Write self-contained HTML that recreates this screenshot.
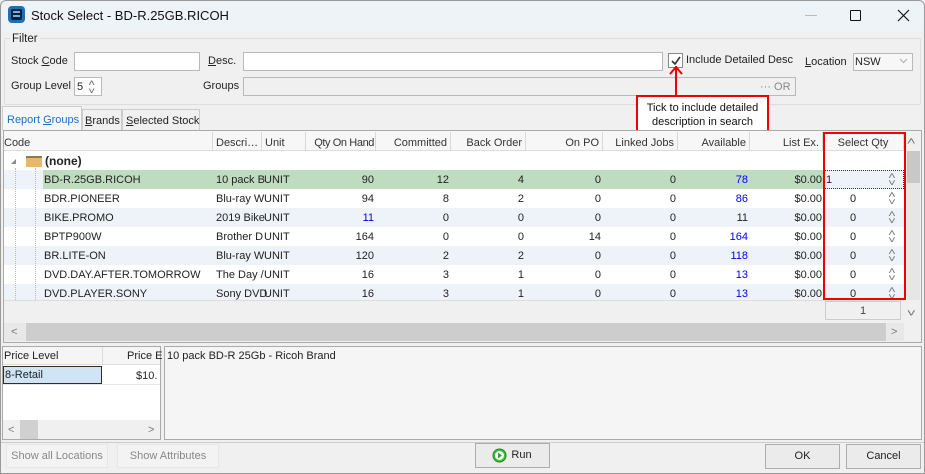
<!DOCTYPE html>
<html><head><meta charset="utf-8">
<style>
*{box-sizing:border-box;margin:0;padding:0}
body{width:925px;height:474px;overflow:hidden;background:#f0f0f0;font-family:"Liberation Sans",Arial,sans-serif;font-size:11px;color:#222;position:relative}
.a{position:absolute;white-space:nowrap}
.inp{position:absolute;background:#fff;border:1px solid #b9b9b9}
.h{position:absolute;top:132px;height:20px;border-right:1px solid #d8d8d8;line-height:22px;padding:0 3px;color:#333;overflow:hidden}
.r{position:absolute;height:19px;line-height:19px}
.btn{position:absolute;border:1px solid #c8c8c8;background:#f3f3f3;text-align:center;line-height:23px;color:#222}
.sp{position:absolute;left:889px;font-size:10px;color:#777;line-height:7px;transform:scaleX(1.3)}
</style></head><body>
<div class="a" style="left:0;top:0;width:925px;height:31px;background:#eef3f8"></div>
<div class="a" style="left:8px;top:6px;width:17px;height:17px;background:#1f6fb5;border-radius:4px"></div>
<div class="a" style="left:11px;top:9px;width:11px;height:11px;background:#0e2033;border-radius:2px"></div>
<div class="a" style="left:13px;top:11px;width:7px;height:2px;background:#6fb0e8"></div>
<div class="a" style="left:13px;top:15px;width:7px;height:2px;background:#6fb0e8"></div>
<div class="a" style="left:31px;top:8px;font-size:13px;color:#111">Stock Select - BD-R.25GB.RICOH</div>
<div class="a" style="left:805px;top:15px;width:12px;height:1px;background:#bbb"></div>
<div class="a" style="left:850px;top:10px;width:11px;height:11px;border:1px solid #111;border-radius:1px"></div>
<svg class="a" style="left:897px;top:9px" width="13" height="13"><path d="M1 1L12 12M12 1L1 12" stroke="#111" stroke-width="1.2"/></svg>
<div class="a" style="left:4px;top:38px;width:917px;height:67px;border:1px solid #ddd;border-radius:2px"></div>
<div class="a" style="left:10px;top:33px;background:#f0f0f0;padding:0 2px;font-size:11.5px">Filter</div>
<div class="a" style="left:11px;top:55px">Stock <u>C</u>ode</div>
<div class="inp" style="left:74px;top:52px;width:126px;height:19px"></div>
<div class="a" style="left:208px;top:55px"><u>D</u>esc.</div>
<div class="inp" style="left:243px;top:52px;width:420px;height:19px"></div>
<div class="inp" style="left:668px;top:53px;width:15px;height:15px;border-color:#888"></div>
<svg class="a" style="left:670px;top:55px" width="12" height="12"><path d="M2 6L5 9L10 2" stroke="#333" stroke-width="1.6" fill="none"/></svg>
<div class="a" style="left:686px;top:54px">Include Detailed Desc</div>
<div class="a" style="left:805px;top:56px"><u>L</u>ocation</div>
<div class="inp" style="left:853px;top:53px;width:60px;height:18px;background:#f7f7f7;padding-left:1px;line-height:17px">NSW</div>
<svg class="a" style="left:899px;top:58px" width="9" height="6"><path d="M1 1L4.5 4.5L8 1" stroke="#aaa" fill="none"/></svg>
<div class="a" style="left:11px;top:80px">Group Level</div>
<div class="inp" style="left:74px;top:77px;width:28px;height:19px;padding-left:2px;line-height:18px">5</div>
<div class="a" style="left:89px;top:79px;font-size:9px;color:#666;line-height:8px;transform:scaleX(1.3)">&#708;<br>&#709;</div>
<div class="a" style="left:203px;top:80px">Groups</div>
<div class="inp" style="left:243px;top:77px;width:553px;height:19px;background:#f0f0f0"></div>
<div class="a" style="left:760px;top:81px;color:#888">··· OR</div>
<div class="a" style="left:675px;top:66px;width:2px;height:29px;background:#e00"></div>
<svg class="a" style="left:669px;top:66px" width="14" height="9"><path d="M1 8L7 1L13 8" stroke="#e00" stroke-width="2" fill="none"/></svg>
<div class="a" style="left:636px;top:95px;width:133px;height:39px;border:2px solid #e00;background:#fff;text-align:center;font-size:11px;line-height:14px;padding-top:4px;color:#111">Tick to include detailed<br>description in search</div>
<div class="a" style="left:2px;top:106px;width:80px;height:24px;background:#f7f7f7;border:1px solid #ccc;border-bottom:none;color:#1c6fc8;padding:7px 0 0 4px">Report <u>G</u>roups</div>
<div class="a" style="left:82px;top:109px;width:40px;height:21px;border:1px solid #ccc;border-bottom:none;padding:5px 0 0 2px"><u>B</u>rands</div>
<div class="a" style="left:122px;top:109px;width:78px;height:21px;border:1px solid #ccc;border-bottom:none;padding:5px 0 0 3px"><u>S</u>elected Stock</div>
<div class="a" style="left:3px;top:130px;width:919px;height:213px;border:1px solid #aaa;background:#f0f0f0"></div>
<div class="a" style="left:4px;top:131px;width:900px;height:20px;background:#f7f7f7;border-bottom:1px solid #ddd"></div>
<div class="h" style="left:4px;width:209px;padding-left:0">Code</div>
<div class="h" style="left:213px;width:49px">Descri…</div>
<div class="h" style="left:262px;width:44px">Unit</div>
<div class="h" style="left:306px;width:70px;text-align:right;padding:0 1px;letter-spacing:-0.4px">Qty On Hand</div>
<div class="h" style="left:376px;width:75px;text-align:right">Committed</div>
<div class="h" style="left:451px;width:75px;text-align:right">Back Order</div>
<div class="h" style="left:526px;width:77px;text-align:right">On PO</div>
<div class="h" style="left:603px;width:75px;text-align:right">Linked Jobs</div>
<div class="h" style="left:678px;width:72px;text-align:right">Available</div>
<div class="h" style="left:750px;width:73px;text-align:right">List Ex.</div>
<div class="h" style="left:823px;width:81px;text-align:center">Select Qty</div>
<div class="a" style="left:4px;top:151px;width:900px;height:149px;background:#fff;overflow:hidden">
 <div class="r" style="left:0;top:19px;width:900px;background:#eef3f9"></div>
 <div class="r" style="left:0;top:57px;width:900px;background:#eef3f9"></div>
 <div class="r" style="left:0;top:95px;width:900px;background:#eef3f9"></div>
 <div class="r" style="left:0;top:133px;width:900px;background:#eef3f9"></div>
 <div class="r" style="left:39px;top:19px;width:780px;background:#c0dcc0"></div>
 <div class="r" style="left:820px;top:19px;width:80px;background:#eef3f9;border:1px dotted #333"></div>
 <div class="a" style="left:7px;top:8px;border-left:5px solid transparent;border-bottom:5px solid #888;width:0;height:0"></div>
 <div class="a" style="left:22px;top:5px;width:16px;height:11px;background:#e8b86a;border-top:2px solid #8a7a5a"></div>
 <div class="a" style="left:11px;top:17px;height:132px;border-left:1px dotted #bbb"></div>
 <div class="a" style="left:31px;top:17px;height:132px;border-left:1px dotted #bbb"></div>
 <div class="a" style="left:41px;top:3px;font-weight:bold;font-size:12px">(none)</div>
</div>
<div class="a" style="left:4px;top:171px;width:900px;height:129px;overflow:hidden">
<div style="position:relative;height:19px;line-height:19px"><span class="a" style="left:40px">BD-R.25GB.RICOH</span><span class="a" style="left:212px">10 pack B</span><span class="a" style="left:260px">UNIT</span><span class="a" style="right:530px">90</span><span class="a" style="right:455px">12</span><span class="a" style="right:380px">4</span><span class="a" style="right:303px">0</span><span class="a" style="right:228px">0</span><span class="a" style="right:156px;color:#00f">78</span><span class="a" style="right:82px">$0.00</span><span class="a" style="left:822px">1</span></div>
<div style="position:relative;height:19px;line-height:19px"><span class="a" style="left:40px">BDR.PIONEER</span><span class="a" style="left:212px">Blu-ray W</span><span class="a" style="left:260px">UNIT</span><span class="a" style="right:530px">94</span><span class="a" style="right:455px">8</span><span class="a" style="right:380px">2</span><span class="a" style="right:303px">0</span><span class="a" style="right:228px">0</span><span class="a" style="right:156px;color:#00f">86</span><span class="a" style="right:82px">$0.00</span><span class="a" style="left:846px">0</span></div>
<div style="position:relative;height:19px;line-height:19px"><span class="a" style="left:40px">BIKE.PROMO</span><span class="a" style="left:212px">2019 Bike</span><span class="a" style="left:260px">UNIT</span><span class="a" style="right:530px;color:#00f">11</span><span class="a" style="right:455px">0</span><span class="a" style="right:380px">0</span><span class="a" style="right:303px">0</span><span class="a" style="right:228px">0</span><span class="a" style="right:156px">11</span><span class="a" style="right:82px">$0.00</span><span class="a" style="left:846px">0</span></div>
<div style="position:relative;height:19px;line-height:19px"><span class="a" style="left:40px">BPTP900W</span><span class="a" style="left:212px">Brother D</span><span class="a" style="left:260px">UNIT</span><span class="a" style="right:530px">164</span><span class="a" style="right:455px">0</span><span class="a" style="right:380px">0</span><span class="a" style="right:303px">14</span><span class="a" style="right:228px">0</span><span class="a" style="right:156px;color:#00f">164</span><span class="a" style="right:82px">$0.00</span><span class="a" style="left:846px">0</span></div>
<div style="position:relative;height:19px;line-height:19px"><span class="a" style="left:40px">BR.LITE-ON</span><span class="a" style="left:212px">Blu-ray W</span><span class="a" style="left:260px">UNIT</span><span class="a" style="right:530px">120</span><span class="a" style="right:455px">2</span><span class="a" style="right:380px">2</span><span class="a" style="right:303px">0</span><span class="a" style="right:228px">0</span><span class="a" style="right:156px;color:#00f">118</span><span class="a" style="right:82px">$0.00</span><span class="a" style="left:846px">0</span></div>
<div style="position:relative;height:19px;line-height:19px"><span class="a" style="left:40px">DVD.DAY.AFTER.TOMORROW</span><span class="a" style="left:212px">The Day /</span><span class="a" style="left:260px">UNIT</span><span class="a" style="right:530px">16</span><span class="a" style="right:455px">3</span><span class="a" style="right:380px">1</span><span class="a" style="right:303px">0</span><span class="a" style="right:228px">0</span><span class="a" style="right:156px;color:#00f">13</span><span class="a" style="right:82px">$0.00</span><span class="a" style="left:846px">0</span></div>
<div style="position:relative;height:19px;line-height:19px"><span class="a" style="left:40px">DVD.PLAYER.SONY</span><span class="a" style="left:212px">Sony DVD</span><span class="a" style="left:260px">UNIT</span><span class="a" style="right:530px">16</span><span class="a" style="right:455px">3</span><span class="a" style="right:380px">1</span><span class="a" style="right:303px">0</span><span class="a" style="right:228px">0</span><span class="a" style="right:156px;color:#00f">13</span><span class="a" style="right:82px">$0.00</span><span class="a" style="left:846px">0</span></div>
</div>
<div class="sp" style="top:173px">&#708;<br>&#709;</div>
<div class="sp" style="top:192px">&#708;<br>&#709;</div>
<div class="sp" style="top:211px">&#708;<br>&#709;</div>
<div class="sp" style="top:230px">&#708;<br>&#709;</div>
<div class="sp" style="top:249px">&#708;<br>&#709;</div>
<div class="sp" style="top:268px">&#708;<br>&#709;</div>
<div class="sp" style="top:287px">&#708;<br>&#709;</div>
<div class="a" style="left:4px;top:300px;width:900px;height:1px;background:#ddd"></div>
<div class="a" style="left:825px;top:301px;width:76px;height:19px;border:1px solid #ccc;text-align:center;line-height:18px;color:#444">1</div>
<div class="a" style="left:904px;top:131px;width:17px;height:193px;background:#f0f0f0"></div>
<div class="a" style="left:907px;top:151px;width:13px;height:32px;background:#c8c8c8"></div>
<div class="a" style="left:907px;top:183px;width:13px;height:117px;background:#e6e6e6"></div>
<div class="a" style="left:908px;top:136px;font-size:11px;color:#777;transform:scaleX(1.4)">&#708;</div>
<div class="a" style="left:908px;top:308px;font-size:11px;color:#777;transform:scaleX(1.4)">&#709;</div>
<div class="a" style="left:4px;top:323px;width:900px;height:18px;background:#cdcdcd"></div>
<div class="a" style="left:4px;top:323px;width:22px;height:18px;background:#e8e8e8;color:#777;padding:3px 0 0 7px">&lt;</div>
<div class="a" style="left:886px;top:323px;width:18px;height:18px;background:#e8e8e8;color:#777;padding:3px 0 0 5px">&gt;</div>
<div class="a" style="left:823px;top:132px;width:83px;height:168px;border:2px solid #e00"></div>
<div class="a" style="left:2px;top:346px;width:159px;height:94px;border:1px solid #aaa;background:#fff"></div>
<div class="a" style="left:3px;top:347px;width:157px;height:18px;background:#f5f5f5;border-bottom:1px solid #ddd"></div>
<div class="a" style="left:4px;top:350px">Price Level</div>
<div class="a" style="left:102px;top:347px;width:1px;height:18px;background:#ddd"></div>
<div class="a" style="left:127px;top:350px">Price E</div>
<div class="a" style="left:3px;top:366px;width:99px;height:18px;background:#cfe4f7;border:1px solid #3a2a1a;padding-left:1px;line-height:17px">8-Retail</div>
<div class="a" style="left:136px;top:370px">$10.</div>
<div class="a" style="left:3px;top:384px;width:157px;height:1px;background:#e8e8e8"></div>
<div class="a" style="left:3px;top:420px;width:157px;height:19px;background:#f0f0f0"></div>
<div class="a" style="left:20px;top:420px;width:18px;height:19px;background:#d0d0d0"></div>
<div class="a" style="left:8px;top:424px;color:#777">&lt;</div>
<div class="a" style="left:148px;top:424px;color:#777">&gt;</div>
<div class="a" style="left:164px;top:346px;width:758px;height:94px;border:1px solid #aaa;background:#f5f5f5"></div>
<div class="a" style="left:167px;top:350px;font-size:11px">10 pack BD-R 25Gb - Ricoh Brand</div>
<div class="a" style="left:0;top:442px;width:925px;height:1px;background:#ccc"></div>
<div class="btn" style="left:6px;top:444px;width:102px;height:24px;border-color:#e6e6e6;color:#888">Show all Locations</div>
<div class="btn" style="left:117px;top:444px;width:102px;height:24px;border-color:#e6e6e6;color:#888">Show Attributes</div>
<div class="btn" style="left:475px;top:443px;width:75px;height:25px;background:#ebebeb;border-color:#adadad;padding-left:18px">Run</div>
<svg class="a" style="left:492px;top:448px" width="15" height="15"><circle cx="7.5" cy="7.5" r="6.5" fill="#3ec03e" stroke="#1d8a1d"/><circle cx="7.5" cy="7.5" r="4.5" fill="#fff"/><path d="M6 4.5L10 7.5L6 10.5Z" fill="#2aa52a"/></svg>
<div class="btn" style="left:765px;top:444px;width:75px;height:25px;background:#ebebeb;border-color:#adadad">OK</div>
<div class="btn" style="left:846px;top:444px;width:75px;height:25px;background:#ebebeb;border-color:#adadad">Cancel</div>
<div class="a" style="left:0;top:0;width:925px;height:474px;border:1px solid #999;border-radius:6px 6px 0 0"></div>
</body></html>
